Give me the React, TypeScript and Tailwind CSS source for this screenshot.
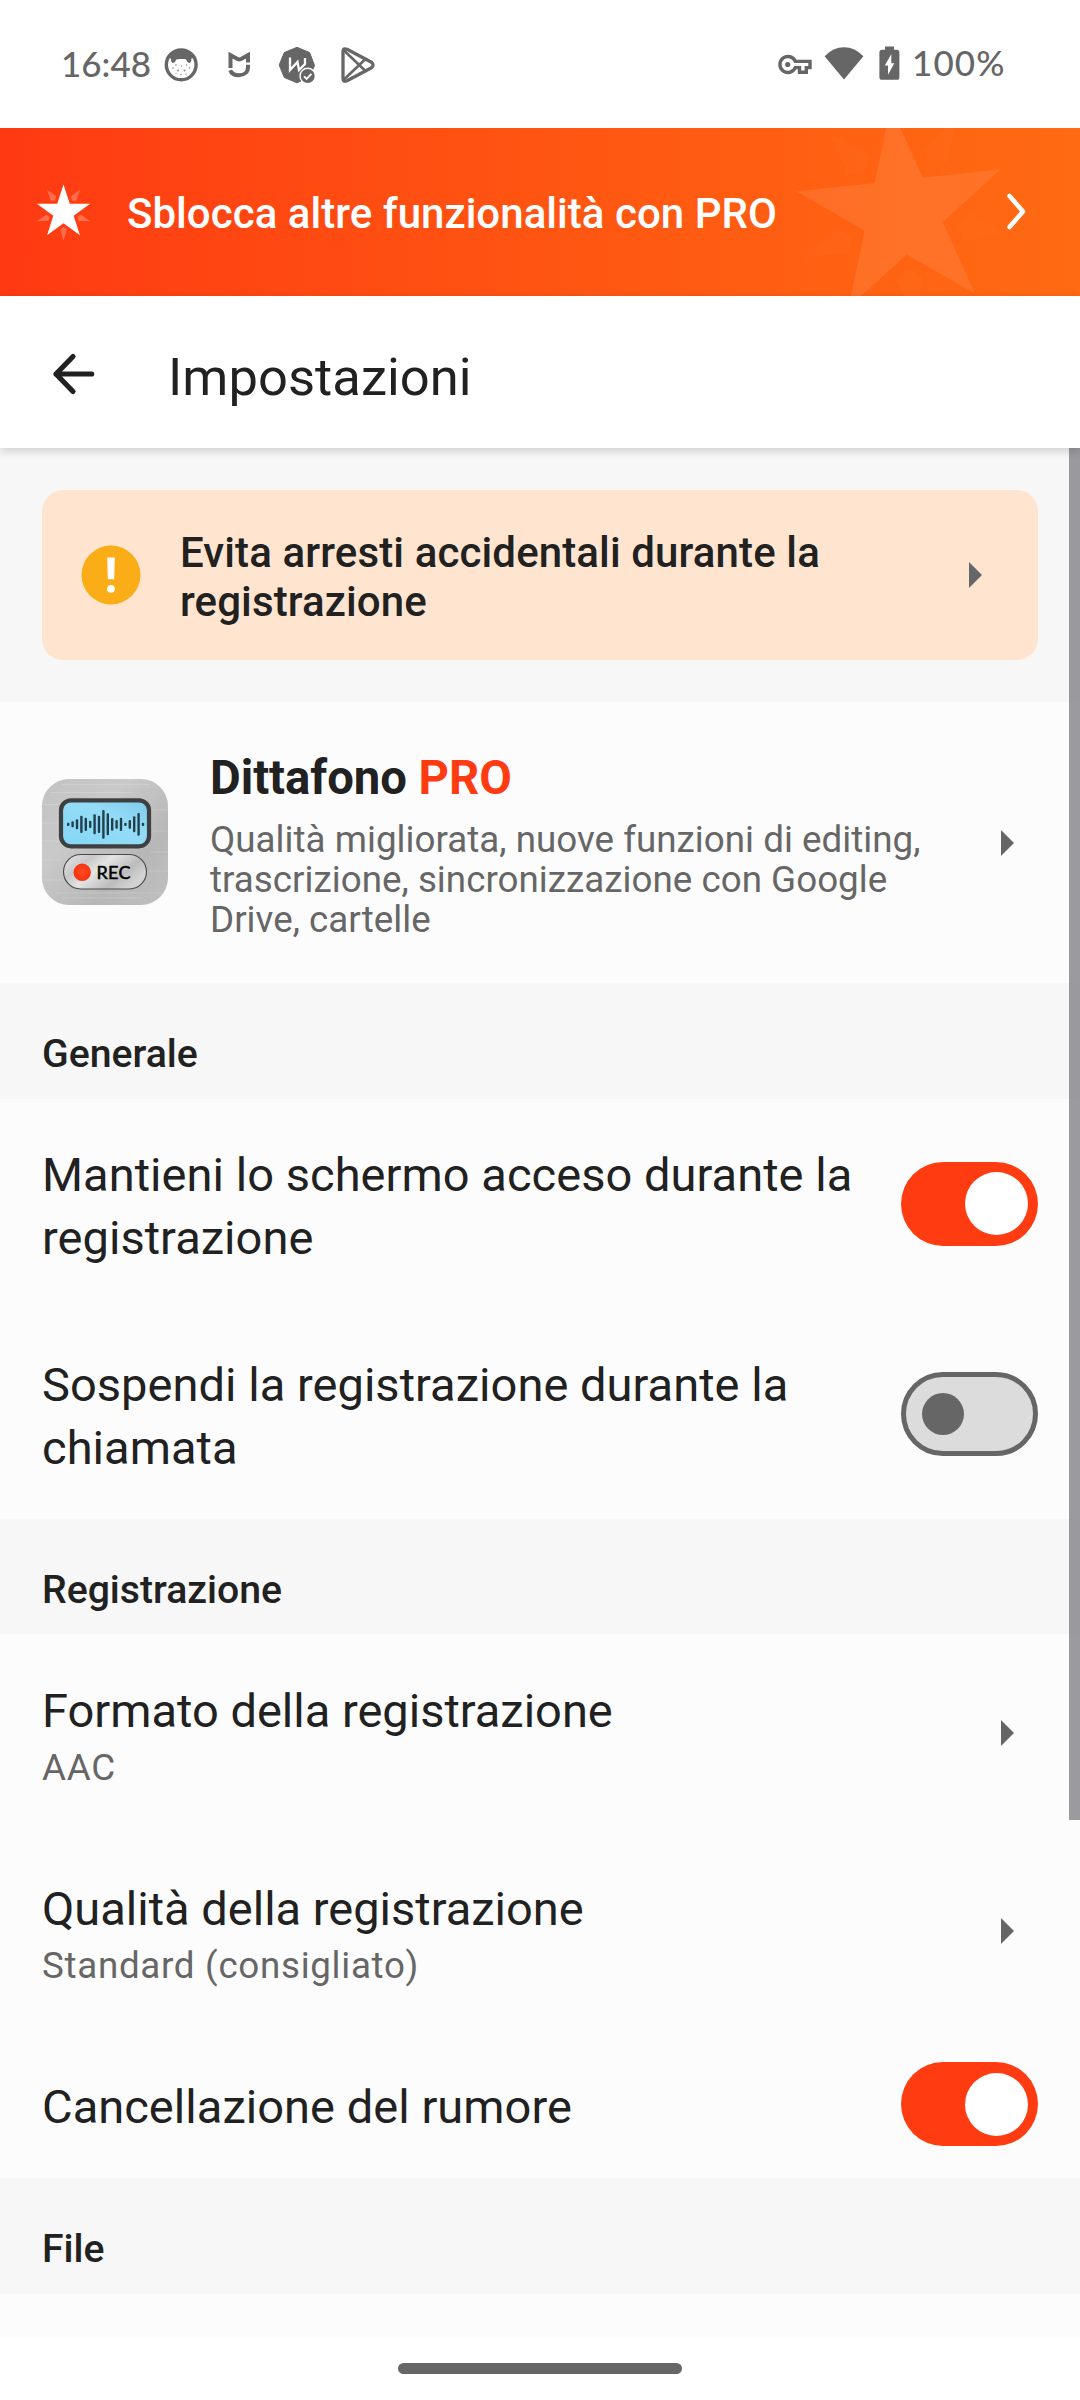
import type { ReactNode } from 'react';

const STAR = '0,-100 22.45,-30.9 95.1,-30.9 36.33,11.8 58.78,80.9 0,38.2 -58.78,80.9 -36.33,11.8 -95.1,-30.9 -22.45,-30.9';
const RAY = '0,100 -12.5,61 0,52 12.5,61';
const RAYS = [0, 72, 144, 216, 288];

function Burst({ rayOpacity, starOpacity }: { rayOpacity: number; starOpacity: number }) {
  return (
    <g fill="#fff">
      <polygon points={STAR} opacity={starOpacity} />
      {RAYS.map((a) => (
        <polygon key={a} points={RAY} transform={`rotate(${a})`} opacity={rayOpacity} />
      ))}
    </g>
  );
}

function StatusBar() {
  return (
    <div className="flex h-32 items-start bg-white pl-[61px] text-[#666]">
      <span className="mt-[42px] w-[102px] font-[Lato,sans-serif] text-[35px] leading-[42px] font-medium">16:48</span>
      <svg className="mt-[47px] ml-px" width="35" height="35" viewBox="0 0 35 35">
        <circle cx="17.2" cy="17.8" r="14.9" fill="#fff" stroke="#666" strokeWidth="3.4" />
        <path d="M4 10.5C7 5 12 2.5 17.2 2.5S27.500 5 30.500 10.500l-3.300 1.300c.4 1.600.2 3-1.400 4.200-1.900-.2-3-1.400-3.400-3.300-2.200-.8-8.200-.8-10.400 0-.4 1.900-1.500 3.100-3.400 3.300-1.600-1.200-1.800-2.600-1.400-4.200z" fill="#666" />
        <g fill="#888">
          <circle cx="9" cy="21" r=".8" /><circle cx="12" cy="18" r=".8" /><circle cx="14" cy="23.500" r="1" /><circle cx="17.500" cy="19" r=".7" />
          <circle cx="20.500" cy="23.500" r="1" /><circle cx="22.500" cy="18" r=".7" /><circle cx="25.500" cy="21" r=".8" /><circle cx="17" cy="27.500" r=".8" />
          <circle cx="12" cy="26.500" r=".6" /><circle cx="22" cy="27" r=".7" />
        </g>
      </svg>
      <svg className="mt-[51px] ml-[28px]" width="24" height="27" viewBox="0 0 24 27" fill="none" stroke="#666" strokeWidth="4">
        <path d="M3.500 17V4.200L11 8.200q1.300.5 2.600 0L21 4.200v7.300" />
        <path d="M3.200 19.200c1.200 3.300 4.700 5 8.800 5 5.400 0 9-3.400 9-8.300v-2.200" />
      </svg>
      <svg className="mt-[46px] ml-[27px]" width="38" height="38" viewBox="0 0 38 38">
        <path d="M19 1.300l12.600 5.200 4.900 13-4.900 11.500L19 36.800 6.300 31.500 1.200 19 6.300 6.500z" fill="#666" stroke="#666" strokeLinejoin="round" />
        <path d="M12 11.500v12.500l7.500-8 1.500 8L27 18v-6" fill="none" stroke="#fff" strokeWidth="2.300" />
        <circle cx="29.700" cy="30" r="8.400" fill="#fff" />
        <circle cx="29.700" cy="30" r="7" fill="#666" />
        <path d="M26 30.300l2.600 2.600 4.800-5" fill="none" stroke="#fff" strokeWidth="1.900" />
      </svg>
      <svg className="mt-[46px] ml-[24px]" width="36" height="38" viewBox="0 0 36 38" fill="none" stroke="#666" strokeWidth="3.300" strokeLinejoin="round" strokeLinecap="round">
        <path d="M3 5.500Q3 1.600 7 3.300L31.500 16.300Q34.600 19 31.500 21.700L7 34.700Q3 36.400 3 32.500z" />
        <path d="M4 4.500L25.500 25M4 33.500L25.500 13" strokeWidth="2.600" />
      </svg>
      <svg className="mt-[54px] ml-[402px]" width="35" height="21" viewBox="0 0 35 21" fill="none" stroke="#666" strokeWidth="3.400">
        <path d="M17.300 7.400A8 8 0 1 0 17.300 13.600H21.500V18.200H28.300V13.600H32V7.400z" />
        <circle cx="9.700" cy="10.500" r="2.600" fill="#666" stroke="none" />
      </svg>
      <svg className="mt-[46px] ml-[11px]" width="40" height="34" viewBox="0 0 40 34" fill="#666">
        <path d="M.6 10.200Q9 1.200 20 1.200T39.400 10.200L20 33.600z" />
      </svg>
      <svg className="mt-[46px] ml-[15px]" width="21" height="34" viewBox="0 0 21 34">
        <path d="M6 .5h9v3.300h2.800q2.600 0 2.600 2.600v24.800q0 2.600-2.600 2.600H3q-2.600 0-2.600-2.600V6.400Q.4 3.800 3 3.800h3z" fill="#666" />
        <path d="M12.300 8v9.200h3L9 28.800v-9.200H5.800z" fill="#fff" />
      </svg>
      <span className="mt-[41px] ml-[12px] font-[Lato,sans-serif] text-[35px] leading-[42px] font-medium tracking-[1.1px]">100%</span>
    </div>
  );
}

function Caret() {
  return (
    <svg className="shrink-0" width="13" height="26" viewBox="0 0 13 26">
      <path d="M0 0L13 13L0 26z" fill="#666" />
    </svg>
  );
}

function Switch({ on }: { on: boolean }) {
  return on ? (
    <span className="flex h-[84px] w-[137px] shrink-0 items-center justify-end rounded-full bg-[#ff3b12] pr-[10px]">
      <span className="size-[63px] rounded-full bg-white" />
    </span>
  ) : (
    <span className="flex h-[84px] w-[137px] shrink-0 items-center rounded-full border-[5px] border-[#666] bg-[#dcdcdc] pl-4">
      <span className="size-[42px] rounded-full bg-[#666]" />
    </span>
  );
}

function SectionHeader({ children }: { children: ReactNode }) {
  return <h2 className="h-[115.5px] pt-12 pl-[42px] text-[39.2px] leading-[46px] font-medium">{children}</h2>;
}

function SwitchRow({ label, on, className }: { label: string; on: boolean; className: string }) {
  return (
    <div className={`flex items-center justify-between bg-[#fcfcfc] pr-[42px] pl-[42px] ${className}`}>
      <p className="w-[830px] text-[47px] tracking-[0.04px]">{label}</p>
      <Switch on={on} />
    </div>
  );
}

function ValueRow({ label, value }: { label: string; value: string }) {
  return (
    <div className="flex h-[198px] items-center justify-between bg-[#fcfcfc] pr-[66px] pl-[42px]">
      <div className="pt-[7px]">
        <p className="text-[47px] leading-[56px]">{label}</p>
        <p className="mt-[7px] text-[36.75px] leading-[44px] tracking-[0.7px] text-[#666]">{value}</p>
      </div>
      <Caret />
    </div>
  );
}

const BARS = [5, 9, 15, 26, 20, 11, 30, 26, 43, 33, 19, 13, 20, 5, 13, 24, 34, 5];

function AppIcon() {
  return (
    <svg className="-mt-px shrink-0" width="126" height="126" viewBox="0 0 126 126">
      <defs>
        <linearGradient id="metal" x1="0" y1="0" x2="1" y2="1">
          <stop offset="0" stopColor="#c3c3c3" />
          <stop offset=".35" stopColor="#c9c9c9" />
          <stop offset=".7" stopColor="#b7b7b7" />
          <stop offset="1" stopColor="#c0c0c0" />
        </linearGradient>
        <linearGradient id="screen" x1="0" y1="1" x2="1" y2="0">
          <stop offset="0" stopColor="#84d7f6" />
          <stop offset=".6" stopColor="#94dcf6" />
          <stop offset="1" stopColor="#7fcbea" />
        </linearGradient>
        <linearGradient id="pill" x1="0" y1="0" x2="1" y2=".5">
          <stop offset="0" stopColor="#e6e6e6" />
          <stop offset=".3" stopColor="#c8c8c8" />
          <stop offset=".5" stopColor="#e4e4e4" />
          <stop offset=".8" stopColor="#bcbcbc" />
          <stop offset="1" stopColor="#d2d2d2" />
        </linearGradient>
        <radialGradient id="dot">
          <stop offset="0" stopColor="#ff4a22" />
          <stop offset="1" stopColor="#f7330c" />
        </radialGradient>
      </defs>
      <rect width="126" height="126" rx="27" fill="url(#metal)" />
      <g stroke="#fff" strokeOpacity=".22" strokeWidth=".8">
        <path d="M20 5.500H108M8 13.500H90M2 25.500H16M110 31H126M0 44H16M110 52H126M0 62H16M108 73H126M0 81H20M107 92H126M2 101H22M14 114H120M20 119H100" />
      </g>
      <rect x="19" y="21.300" width="88" height="46" rx="10" fill="url(#screen)" stroke="#3d3f41" strokeWidth="4.200" />
      {BARS.map((h, i) => (
        <rect key={i} x={25 + i * 4.4} y={45.3 - h / 3} width="2.400" height={(h * 2) / 3} rx="1" fill="#21404d" />
      ))}
      <rect x="21.500" y="75.500" width="83" height="34.500" rx="17.200" fill="url(#pill)" stroke="#4a4a4a" strokeWidth="1.100" />
      <circle cx="40.200" cy="93.300" r="8.700" fill="url(#dot)" />
      <text x="54.500" y="99.700" fontFamily="Lato, sans-serif" fontWeight="400" fontSize="18" textLength="34" fill="#000" stroke="#000" strokeWidth=".5">REC</text>
    </svg>
  );
}

export default function App() {
  return (
    <div className="flex h-[2400px] w-[1080px] flex-col overflow-hidden bg-white font-[Roboto,sans-serif] text-[#212121]">
      <StatusBar />

      <div className="relative flex h-[168px] shrink-0 items-center overflow-hidden bg-gradient-to-r from-[#ff3912] to-[#ff6a12] pr-[54px] pl-[35px] text-white">
        <svg className="absolute top-0 left-[780px]" width="244" height="168" viewBox="0 0 244 168">
          <g transform="translate(122.300 85.500) rotate(-6.200) scale(1.08)">
            <Burst starOpacity={0.09} rayOpacity={0.02} />
          </g>
        </svg>
        <svg width="57" height="57" viewBox="-28.500 -28.500 57 57">
          <g transform="scale(.28)">
            <Burst starOpacity={1} rayOpacity={0.25} />
          </g>
        </svg>
        <p className="relative grow pt-[3px] pl-[35px] text-[42px] leading-[50px] font-medium tracking-[0.04px]">Sblocca altre funzionalità con PRO</p>
        <svg className="relative" width="20" height="38" viewBox="0 0 20 38" fill="none" stroke="#fff" strokeWidth="4.600" strokeLinecap="round" strokeLinejoin="round">
          <path d="M3.500 3L17 18.500L3.500 34" />
        </svg>
      </div>

      <header className="relative z-10 flex h-[152px] shrink-0 items-center bg-white pl-[52px] shadow-[0_3px_9px_rgba(0,0,0,0.17)]">
        <svg className="mt-1" width="44" height="44" viewBox="0 0 44 44" fill="none" stroke="#212121" strokeWidth="5.200" strokeLinecap="round" strokeLinejoin="round">
          <path d="M21 4.500L4 22L21 39.500M4 22H39.700" />
        </svg>
        <h1 className="pt-[9px] pl-[72px] text-[52.5px] leading-[62px] tracking-[0.05px]">Impostazioni</h1>
      </header>

      <main className="relative h-[1889px] shrink-0 overflow-hidden bg-[#f7f7f7]">
        <div className="px-[42px] py-[42px]">
          <div className="flex h-[170px] items-center rounded-[21px] bg-[#ffe5cf] pr-[56px] pl-[39px]">
            <svg className="shrink-0" width="60" height="60" viewBox="0 0 60 60">
              <circle cx="30" cy="30" r="29.500" fill="#fbad18" />
              <path d="M26.200 12.500h7.600l-.6 21.800h-6.400z" fill="#fff" />
              <circle cx="30" cy="43.800" r="3.900" fill="#fff" />
            </svg>
            <p className="w-[700px] pt-1 pl-[39px] text-[42px] leading-[49px] font-medium tracking-[0.12px]">
              Evita arresti accidentali durante la registrazione
            </p>
            <div className="ml-auto"><Caret /></div>
          </div>
        </div>

        <div className="flex h-[281px] items-center bg-[#fcfcfc] pr-[66px] pl-[42px]">
          <AppIcon />
          <div className="w-[760px] pt-[5px] pl-[42px]">
            <p className="text-[47.25px] leading-[56px] font-bold tracking-[-0.04px]">
              Dittafono <span className="text-[#ff3b12]">PRO</span>
            </p>
            <p className="mt-[14px] text-[36.75px] leading-[40px] tracking-[0.02px] text-[#666]">
              Qualità migliorata, nuove funzioni di editing, trascrizione, sincronizzazione con Google Drive, cartelle
            </p>
          </div>
          <div className="ml-auto"><Caret /></div>
        </div>

        <SectionHeader>Generale</SectionHeader>
        <SwitchRow label="Mantieni lo schermo acceso durante la registrazione" on className="h-[210px] leading-[63px] [&>p]:pt-[5.5px]" />
        <SwitchRow label="Sospendi la registrazione durante la chiamata" on={false} className="h-[210px] leading-[63px] [&>p]:pt-[5.5px]" />

        <SectionHeader>Registrazione</SectionHeader>
        <ValueRow label="Formato della registrazione" value="AAC" />
        <ValueRow label="Qualità della registrazione" value="Standard (consigliato)" />
        <SwitchRow label="Cancellazione del rumore" on className="h-[148px] leading-[56px] [&>p]:pt-[6px]" />

        <SectionHeader>File</SectionHeader>
        <div className="h-[60px] bg-[#fcfcfc]" />

        <div className="absolute top-0 right-0 h-[1372px] w-[11px] bg-[#7b7980]/75" />
      </main>

      <footer className="flex grow justify-center bg-white pt-[26px]">
        <div className="h-[11px] w-[284px] rounded-full bg-[#666]" />
      </footer>
    </div>
  );
}
